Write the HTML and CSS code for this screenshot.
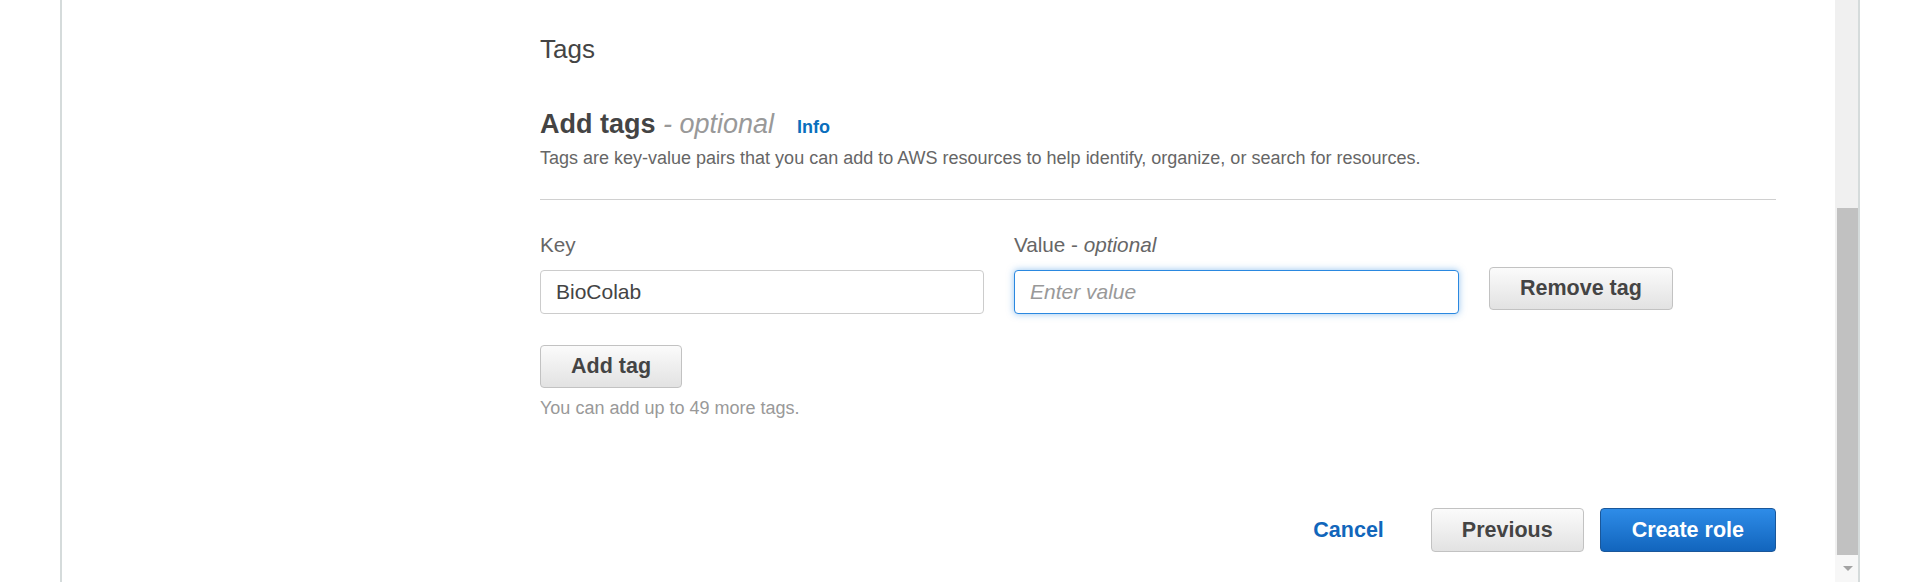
FILE: index.html
```html
<!DOCTYPE html>
<html lang="en">
<head>
<meta charset="utf-8">
<title>Create role - Tags</title>
<link rel="stylesheet" href="styles.css">
</head>
<body>
<div class="frame">
  <main class="main">
    <h1 class="page-title">Tags</h1>
    <div class="section-head">
      <h2 class="section-title">Add tags <span class="opt">- optional</span></h2>
      <a class="info" href="#">Info</a>
    </div>
    <p class="desc">Tags are key-value pairs that you can add to AWS resources to help identify, organize, or search for resources.</p>
    <hr class="divider">
    <div class="tag-row">
      <div class="field field-key">
        <label class="label">Key</label>
        <input class="input" type="text" value="BioColab">
      </div>
      <div class="field field-value">
        <label class="label">Value - <i>optional</i></label>
        <input class="input input-focus" type="text" placeholder="Enter value">
      </div>
      <button class="btn btn-remove" type="button">Remove tag</button>
    </div>
    <button class="btn btn-add" type="button">Add tag</button>
    <p class="hint">You can add up to 49 more tags.</p>
    <div class="footer">
      <button class="btn-link" type="button">Cancel</button>
      <button class="btn" type="button">Previous</button>
      <button class="btn btn-primary" type="button">Create role</button>
    </div>
  </main>
  <div class="scrollbar">
    <div class="sb-track-top"></div>
    <div class="sb-thumb"></div>
    <div class="sb-bottom"><span class="sb-arrow"></span></div>
  </div>
</div>
</body>
</html>
```
FILE: styles.css
```css
* { box-sizing: border-box; }
html, body { margin: 0; padding: 0; height: 100%; }
body {
  font-family: "Liberation Sans", Arial, Helvetica, sans-serif;
  background: #fff;
  color: #444;
  overflow: hidden;
}
.frame {
  display: flex;
  height: 582px;
  width: 1800px;
  margin-left: 60px;
  border-left: 2px solid #d5dbdb;
  border-right: 2px solid #d5dbdb;
}
.main {
  flex: 1;
  padding: 34px 59px 0 478px;
}
.page-title {
  margin: 0;
  font-size: 26px;
  line-height: 30px;
  font-weight: normal;
  color: #444;
}
.section-head {
  display: flex;
  align-items: baseline;
  margin-top: 44px;
}
.section-title {
  margin: 0;
  font-size: 27px;
  line-height: 32px;
  font-weight: bold;
  color: #444;
}
.opt {
  font-weight: normal;
  font-style: italic;
  color: #999;
}
.info {
  margin-left: 23px;
  font-size: 18px;
  font-weight: bold;
  color: #0a6ebd;
  text-decoration: none;
}
.desc {
  margin: 6px 0 0;
  font-size: 18px;
  line-height: 24px;
  color: #666;
}
.divider {
  margin: 29px 0 0;
  border: 0;
  border-top: 1px solid #d0d0d0;
  height: 0;
}
.tag-row {
  display: flex;
  gap: 30px;
  margin-top: 32px;
}
.field { display: flex; flex-direction: column; }
.field-key { width: 444px; }
.field-value { width: 445px; }
.label {
  font-size: 20.7px;
  line-height: 26px;
  color: #666;
  margin-bottom: 12px;
}
.label i { color: #666; }
.input {
  height: 44px;
  width: 100%;
  border: 1px solid #ccc;
  border-radius: 4px;
  padding: 0 15px;
  font-family: inherit;
  font-size: 21px;
  color: #444;
  background: #fff;
  outline: none;
}
.input::placeholder { color: #999; font-style: italic; }
.input-focus {
  border-color: #2a88e0;
  box-shadow: 0 0 7px rgba(42, 136, 224, 0.5);
}
.btn {
  height: 43px;
  padding: 0 30px;
  border: 1px solid #c2c2c2;
  border-radius: 4px;
  background: linear-gradient(#fbfbfb, #e2e2e2);
  font-family: inherit;
  font-size: 21.5px;
  font-weight: bold;
  color: #444;
  cursor: pointer;
}
.btn-remove {
  align-self: flex-end;
  margin-bottom: 4px;
}
.btn-add { margin-top: 31px; display: block; }
.hint {
  margin: 8px 0 0;
  font-size: 18px;
  line-height: 24px;
  color: #999;
}
.footer {
  display: flex;
  justify-content: flex-end;
  align-items: center;
  gap: 16px;
  margin-top: 88px;
}
.footer .btn { height: 44px; }
.btn-link {
  height: 44px;
  padding: 0 31px;
  border: 0;
  background: none;
  font-family: inherit;
  font-size: 21.5px;
  font-weight: bold;
  color: #1166bb;
  cursor: pointer;
}
.btn-primary {
  background: linear-gradient(#2e8ce8, #1265bd);
  border-color: #1a579a;
  color: #fff;
  padding: 0 31px;
}
.scrollbar {
  width: 23px;
  display: flex;
  flex-direction: column;
  background: #f0f0f0;
}
.sb-track-top { height: 208px; }
.sb-thumb {
  height: 347px;
  margin-left: 2px;
  background: #c1c1c1;
}
.sb-bottom {
  flex: 1;
  background: #f7f7f7;
  display: flex;
  justify-content: center;
  align-items: center;
  padding-left: 2px;
}
.sb-arrow {
  width: 0;
  height: 0;
  border-left: 5px solid transparent;
  border-right: 5px solid transparent;
  border-top: 5px solid #a3a3a3;
}
```
